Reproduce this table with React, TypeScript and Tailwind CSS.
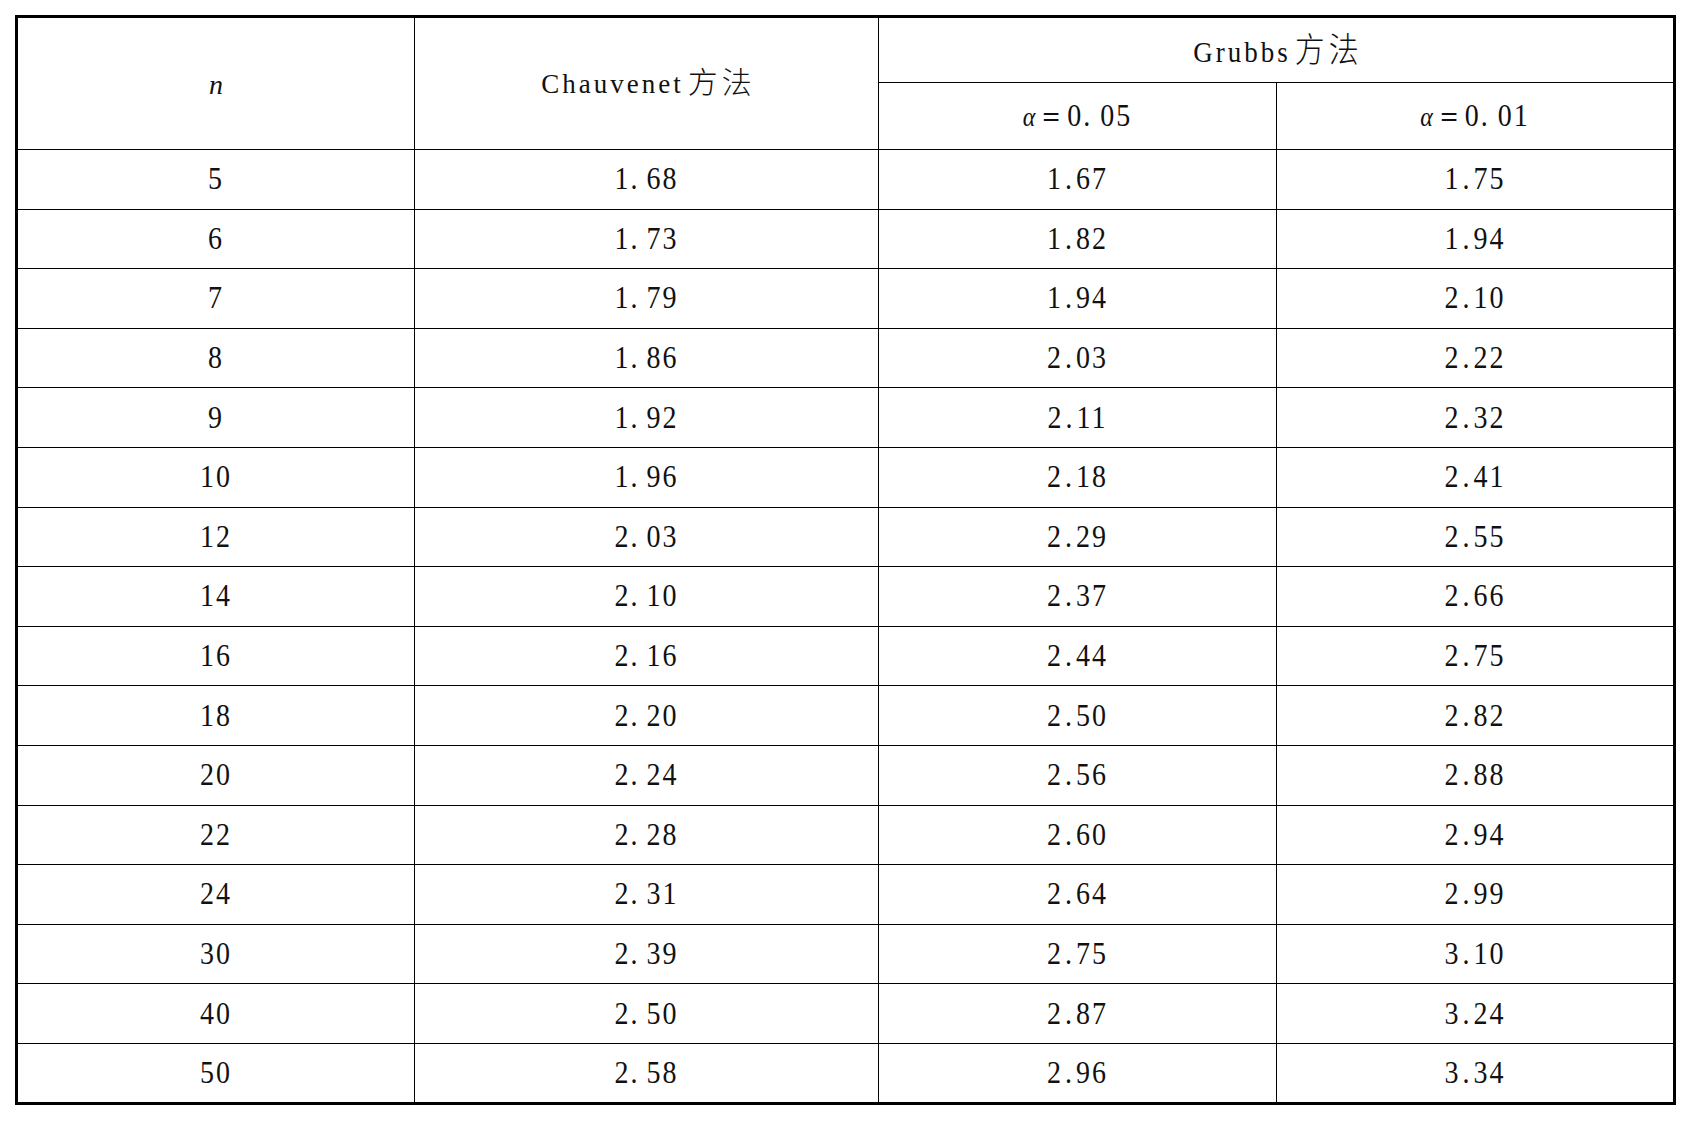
const rows: [string, string, string, string][] = [
  ['5', '1.68', '1.67', '1.75'],
  ['6', '1.73', '1.82', '1.94'],
  ['7', '1.79', '1.94', '2.10'],
  ['8', '1.86', '2.03', '2.22'],
  ['9', '1.92', '2.11', '2.32'],
  ['10', '1.96', '2.18', '2.41'],
  ['12', '2.03', '2.29', '2.55'],
  ['14', '2.10', '2.37', '2.66'],
  ['16', '2.16', '2.44', '2.75'],
  ['18', '2.20', '2.50', '2.82'],
  ['20', '2.24', '2.56', '2.88'],
  ['22', '2.28', '2.60', '2.94'],
  ['24', '2.31', '2.64', '2.99'],
  ['30', '2.39', '2.75', '3.10'],
  ['40', '2.50', '2.87', '3.24'],
  ['50', '2.58', '2.96', '3.34'],
]

// Chauvenet column sets the dot tight to the integer, then a gap
function Chauv({ v }: { v: string }) {
  const [a, b] = v.split('.')
  return (
    <span className="inline-block scale-y-[1.15] tracking-[2px]">
      {a}.<span className="ml-[7px]">{b}</span>
    </span>
  )
}

function Grubbs({ v }: { v: string }) {
  const [a, b] = v.split('.')
  return (
    <span className="inline-block scale-y-[1.15] tracking-[2px]">
      {a}
      <span className="ml-[2px]">.</span>
      <span className="ml-[2px]">{b}</span>
    </span>
  )
}

function Cjk({ children }: { children: string }) {
  return (
    <span className="ml-[4px] font-['Noto_Sans_CJK_SC',sans-serif] text-[30px] font-light tracking-[4px]">
      {children}
    </span>
  )
}

export default function App() {
  return (
    <div className="min-h-screen bg-white pl-[15px] pt-[15px] font-['Liberation_Serif',serif] text-black">
      <table className="w-[1658px] table-fixed border-collapse border-[3px] border-black font-['Liberation_Serif',serif] text-[28px] leading-none text-[#111]">
        <colgroup>
          <col className="w-[398px]" />
          <col className="w-[464px]" />
          <col className="w-[398px]" />
          <col className="w-[398px]" />
        </colgroup>
        <thead>
          <tr className="h-[66px]">
            <th rowSpan={2} className="border border-black pt-[2px] text-center text-[28px] font-normal italic">
              n
            </th>
            <th rowSpan={2} className="border border-black pb-[4px] pl-[4px] text-center text-[27px] font-normal tracking-[3px]">
              Chauvenet<Cjk>方法</Cjk>
            </th>
            <th colSpan={2} className="border border-black pb-[2px] pl-[4px] text-center text-[27px] font-normal tracking-[3px]">
              <span className="inline-block scale-y-[1.12]">
                Grubbs<Cjk>方法</Cjk>
              </span>
            </th>
          </tr>
          <tr className="h-[67px]">
            <th className="border border-black text-center font-normal">
              <span className="inline-block scale-y-[1.1] tracking-[2px]">
                <i className="text-[24px]">α</i>＝0.<span className="ml-[8px]">05</span>
              </span>
            </th>
            <th className="border border-black text-center font-normal">
              <span className="inline-block scale-y-[1.1] tracking-[2px]">
                <i className="text-[24px]">α</i>＝0.<span className="ml-[8px]">01</span>
              </span>
            </th>
          </tr>
        </thead>
        <tbody>
          {rows.map((r) => (
            <tr key={r[0]} className="h-[59.6px]">
              <td className="border border-black text-center">
                <span className="inline-block scale-y-[1.15] tracking-[2px]">{r[0]}</span>
              </td>
              <td className="border border-black text-center">
                <Chauv v={r[1]} />
              </td>
              <td className="border border-black text-center">
                <Grubbs v={r[2]} />
              </td>
              <td className="border border-black text-center">
                <Grubbs v={r[3]} />
              </td>
            </tr>
          ))}
        </tbody>
      </table>
    </div>
  )
}
